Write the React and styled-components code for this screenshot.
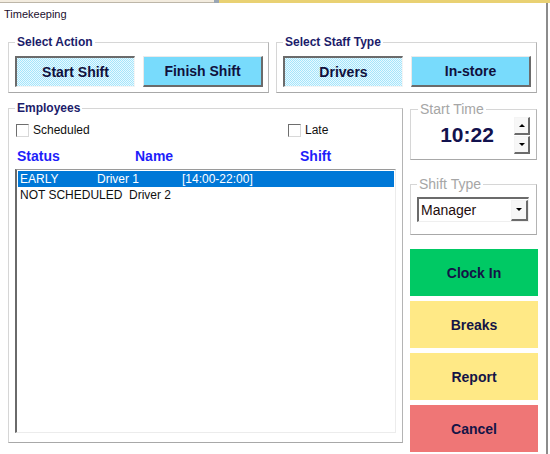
import React from 'react';
import styled, { createGlobalStyle, css } from 'styled-components';

const GlobalStyle = createGlobalStyle`
  html, body {
    margin: 0;
    padding: 0;
    background: #ffffff;
  }
  body {
    font-family: 'Liberation Sans', Arial, sans-serif;
  }
`;

const Screen = styled.div`
  width: 550px;
  height: 454px;
  overflow: hidden;
  background: #ffffff;
  display: flex;
  flex-direction: column;
`;

const TopStrip = styled.div`
  display: flex;
  height: 3px;
  flex-shrink: 0;
`;

const StripPart = styled.div`
  width: ${(p) => (p.$w ? `${p.$w}px` : 'auto')};
  flex: ${(p) => (p.$w ? 'none' : 1)};
  background: ${(p) => p.$c};
  border-bottom: 1px solid ${(p) => p.$edge || 'transparent'};
`;

const Window = styled.div`
  width: 546px;
  flex: 1;
  border-right: 2px solid #8c8c8c;
  display: flex;
  flex-direction: column;
`;

const Title = styled.div`
  height: 32px;
  box-sizing: border-box;
  padding: 4px 0 0 4px;
  font-size: 11px;
  line-height: 14px;
  color: #1c0f2e;
`;

const TopRow = styled.div`
  display: flex;
  gap: 7px;
  padding-left: 8px;
`;

const MainRow = styled.div`
  display: flex;
  gap: 7px;
  padding-left: 8px;
  margin-top: 8px;
`;

const Group = styled.fieldset`
  margin: 0;
  min-width: 0;
  box-sizing: border-box;
  width: ${(p) => p.$w}px;
  height: ${(p) => (p.$h ? `${p.$h}px` : 'auto')};
  padding: ${(p) => p.$pad || '7px 5px 5px 6px'};
  border: 1px solid #d6d6d6;
  border-right-color: #b4b4b4;
  border-bottom-color: #a8a8a8;
`;

const Legend = styled.legend`
  padding: 0 2px;
  margin-left: ${(p) => p.$ml || 0}px;
  ${(p) =>
    p.$muted
      ? css`
          font-size: 14px;
          line-height: 16px;
          font-weight: 400;
          color: #a6a6a6;
        `
      : css`
          font-size: 12px;
          line-height: 14px;
          font-weight: 700;
          color: #1c1c6a;
        `}
`;

const ButtonPair = styled.div`
  display: flex;
  gap: 8px;
`;

const ToggleButton = styled.button`
  width: 120px;
  height: 31px;
  box-sizing: border-box;
  margin: 0;
  padding: 0;
  font-family: 'Liberation Sans', Arial, sans-serif;
  font-size: 14px;
  font-weight: 700;
  color: #10103c;
  cursor: pointer;
  ${(p) =>
    p.$pressed
      ? css`
          background: repeating-conic-gradient(#a4e5fb 0 25%, #e9f9ff 0 50%) 0 0 / 2px 2px;
          border-style: solid;
          border-width: 2px 1px 1px 2px;
          border-color: #6b6b6b #f4f4f4 #f4f4f4 #6b6b6b;
        `
      : css`
          background: #78dbfc;
          border-style: solid;
          border-width: 1px 2px 2px 1px;
          border-color: #eaeaea #6b6b6b #6b6b6b #eaeaea;
        `}
`;

const CheckRow = styled.div`
  display: flex;
  align-items: center;
  height: 16px;
`;

const CheckLabel = styled.label`
  display: flex;
  align-items: center;
  gap: 4px;
  font-size: 12px;
  line-height: 16px;
  color: #101010;
  width: ${(p) => (p.$w ? `${p.$w}px` : 'auto')};
`;

const CheckBox = styled.span`
  width: 11px;
  height: 11px;
  border: 1px solid #6e6e6e;
  border-right-color: #d8d8d8;
  border-bottom-color: #d8d8d8;
  background: #ffffff;
`;

const HeaderRow = styled.div`
  display: grid;
  grid-template-columns: 118px 165px auto;
  margin-top: 10px;
  padding-left: 1px;
  font-size: 14px;
  line-height: 16px;
  font-weight: 700;
  color: #1e1efa;
`;

const ListBox = styled.div`
  margin: 5px 0 0 -1px;
  width: 381px;
  height: 264px;
  box-sizing: border-box;
  padding: 1px;
  border: 1px solid #ececec;
  border-left: 2px solid #6a6a6a;
  border-top: 1px solid #9a9a9a;
  background: #ffffff;
`;

const ListRow = styled.div`
  display: flex;
  height: 16px;
  padding-left: 2px;
  font-size: 12px;
  line-height: 16px;
  white-space: nowrap;
  background: ${(p) => (p.$selected ? '#0078d7' : 'transparent')};
  color: ${(p) => (p.$selected ? '#ffffff' : '#101010')};
`;

const Cell = styled.span`
  width: ${(p) => (p.$w ? `${p.$w}px` : 'auto')};
  flex: none;
`;

const SideColumn = styled.div`
  width: 128px;
  display: flex;
  flex-direction: column;
`;

const TimeRow = styled.div`
  display: flex;
  align-items: flex-start;
`;

const TimeValue = styled.div`
  flex: 1;
  text-align: center;
  font-size: 21px;
  font-weight: 700;
  line-height: 36px;
  color: #12124e;
  padding-left: 2px;
`;

const SpinStack = styled.div`
  display: flex;
  flex-direction: column;
  gap: 1px;
`;

const SpinButton = styled.button`
  width: 16px;
  height: 18px;
  margin: 0;
  padding: 0;
  box-sizing: border-box;
  display: flex;
  align-items: center;
  justify-content: center;
  background: #f7f7f7;
  border-style: solid;
  border-width: 1px 2px 2px 1px;
  border-color: #f4f4f4 #6b6b6b #6b6b6b #f4f4f4;
`;

const Arrow = styled.span`
  width: 0;
  height: 0;
  border-left: 3px solid transparent;
  border-right: 3px solid transparent;
  ${(p) =>
    p.$up
      ? css`
          border-bottom: 3px solid #000000;
        `
      : css`
          border-top: 3px solid #000000;
        `}
`;

const SelectBox = styled.div`
  height: 25px;
  box-sizing: border-box;
  display: flex;
  align-items: center;
  border-style: solid;
  border-width: 2px 1px 1px 2px;
  border-color: #6b6b6b #efefef #efefef #6b6b6b;
  background: #ffffff;
`;

const SelectText = styled.span`
  flex: 1;
  padding-left: 2px;
  font-size: 14px;
  line-height: 20px;
  color: #1e0c0c;
`;

const DropButton = styled.span`
  width: 17px;
  height: 21px;
  box-sizing: border-box;
  display: flex;
  align-items: center;
  justify-content: center;
  background: #f7f7f7;
  border-style: solid;
  border-width: 1px 2px 2px 1px;
  border-color: #f4f4f4 #6b6b6b #6b6b6b #f4f4f4;
`;

const ActionStack = styled.div`
  display: flex;
  flex-direction: column;
  gap: 5px;
  margin-top: 14px;
`;

const ActionButton = styled.button`
  width: 128px;
  height: 47px;
  margin: 0;
  padding: 0;
  border: none;
  background: ${(p) => p.$bg};
  font-family: 'Liberation Sans', Arial, sans-serif;
  font-size: 14px;
  font-weight: 700;
  color: #141446;
  cursor: pointer;
`;

const actions = [
  { label: 'Clock In', bg: '#00c964' },
  { label: 'Breaks', bg: '#ffe986' },
  { label: 'Report', bg: '#ffe986' },
  { label: 'Cancel', bg: '#ef7676' },
];

const App = () => (
  <>
    <GlobalStyle />
    <Screen>
      <TopStrip>
        <StripPart $w={214} $c="#f3ecdf" $edge="#bdb6a8" />
        <StripPart $w={5} $c="#9aa6b4" />
        <StripPart $c="#e9d173" />
      </TopStrip>
      <Window>
        <Title>Timekeeping</Title>
        <TopRow>
          <Group $w={261}>
            <Legend>Select Action</Legend>
            <ButtonPair>
              <ToggleButton $pressed>Start Shift</ToggleButton>
              <ToggleButton>Finish Shift</ToggleButton>
            </ButtonPair>
          </Group>
          <Group $w={261}>
            <Legend>Select Staff Type</Legend>
            <ButtonPair>
              <ToggleButton $pressed>Drivers</ToggleButton>
              <ToggleButton>In-store</ToggleButton>
            </ButtonPair>
          </Group>
        </TopRow>
        <MainRow>
          <Group $w={395} $h={342} $pad="7px 6px 9px 7px">
            <Legend $ml={-1}>Employees</Legend>
            <CheckRow>
              <CheckLabel $w={272}>
                <CheckBox />
                Scheduled
              </CheckLabel>
              <CheckLabel>
                <CheckBox />
                Late
              </CheckLabel>
            </CheckRow>
            <HeaderRow>
              <span>Status</span>
              <span>Name</span>
              <span>Shift</span>
            </HeaderRow>
            <ListBox>
              <ListRow $selected>
                <Cell $w={77}>EARLY</Cell>
                <Cell $w={85}>Driver 1</Cell>
                <Cell>[14:00-22:00]</Cell>
              </ListRow>
              <ListRow>
                <Cell $w={109}>NOT SCHEDULED</Cell>
                <Cell>Driver 2</Cell>
              </ListRow>
            </ListBox>
          </Group>
          <SideColumn>
            <Group $w={127} $pad="0 6px 5px 7px">
              <Legend $muted>Start Time</Legend>
              <TimeRow>
                <TimeValue>10:22</TimeValue>
                <SpinStack>
                  <SpinButton aria-label="up">
                    <Arrow $up />
                  </SpinButton>
                  <SpinButton aria-label="down">
                    <Arrow />
                  </SpinButton>
                </SpinStack>
              </TimeRow>
            </Group>
            <Group $w={127} $pad="5px 7px 12px 6px" style={{ marginTop: 16 }}>
              <Legend $muted>Shift Type</Legend>
              <SelectBox>
                <SelectText>Manager</SelectText>
                <DropButton>
                  <Arrow />
                </DropButton>
              </SelectBox>
            </Group>
            <ActionStack>
              {actions.map((a) => (
                <ActionButton key={a.label} $bg={a.bg}>
                  {a.label}
                </ActionButton>
              ))}
            </ActionStack>
          </SideColumn>
        </MainRow>
      </Window>
    </Screen>
  </>
);

export default App;
